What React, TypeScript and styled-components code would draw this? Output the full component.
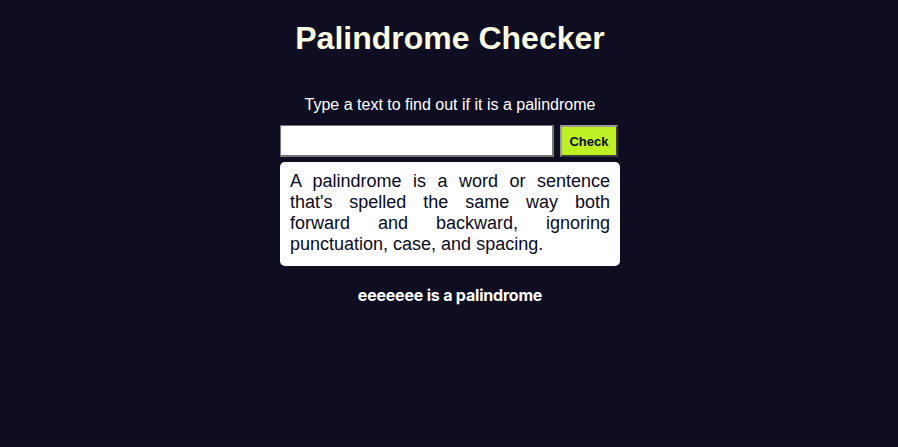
import styled, { createGlobalStyle } from "styled-components";

const GlobalStyle = createGlobalStyle`
  * {
    box-sizing: border-box;
  }

  body {
    margin: 0;
    background-color: #0e0d22;
    font-family: "Liberation Sans", Arial, sans-serif;
    min-height: 100vh;
  }
`;

const Main = styled.main`
  display: flex;
  flex-direction: column;
  align-items: center;
  padding: 20px 0 0 2px;
`;

const Title = styled.h1`
  margin: 0;
  font-size: 32px;
  line-height: 37px;
  font-weight: 700;
  color: #fdfde3;
`;

const Label = styled.label`
  margin-top: 39px;
  font-size: 16px;
  line-height: 18px;
  color: #ffffff;
`;

const Form = styled.form`
  display: flex;
  gap: 6px;
  width: 340px;
  margin-top: 11px;
`;

const Input = styled.input`
  width: 274px;
  height: 32px;
  border-width: 1px 2px 2px 1px;
  border-color: #767676;
  border-style: solid;
  background: #ffffff;
  font-size: 16px;
`;

const Button = styled.button`
  width: 58px;
  height: 32px;
  padding: 0;
  background-color: #bef023;
  border: 2px solid;
  border-color: #9a9a9a #3b3b3b #3b3b3b #9a9a9a;
  font-family: "Liberation Sans", Arial, sans-serif;
  font-size: 13px;
  font-weight: 700;
  color: #0a0a23;
  cursor: pointer;
`;

const Card = styled.div`
  width: 340px;
  margin-top: 5px;
  padding: 9px 10px 11px;
  background: #ffffff;
  border-radius: 5px;
`;

const CardText = styled.p`
  margin: 0;
  font-size: 18px;
  line-height: 21px;
  text-align: justify;
  color: #0a0a23;
`;

const Result = styled.p`
  margin: 19px 0 0;
  font-family: Inter, "Liberation Sans", sans-serif;
  font-size: 16px;
  line-height: 20px;
  font-weight: 700;
  letter-spacing: -0.2px;
  color: #ffffff;
`;

export default function App() {
  return (
    <>
      <GlobalStyle />
      <Main>
        <Title>Palindrome Checker</Title>
        <Label htmlFor="text-input">Type a text to find out if it is a palindrome</Label>
        <Form onSubmit={(e) => e.preventDefault()}>
          <Input id="text-input" type="text" />
          <Button type="submit">Check</Button>
        </Form>
        <Card>
          <CardText>
            A palindrome is a word or sentence that's spelled the same way both
            forward and backward, ignoring punctuation, case, and spacing.
          </CardText>
        </Card>
        <Result>eeeeeee is a palindrome</Result>
      </Main>
    </>
  );
}
